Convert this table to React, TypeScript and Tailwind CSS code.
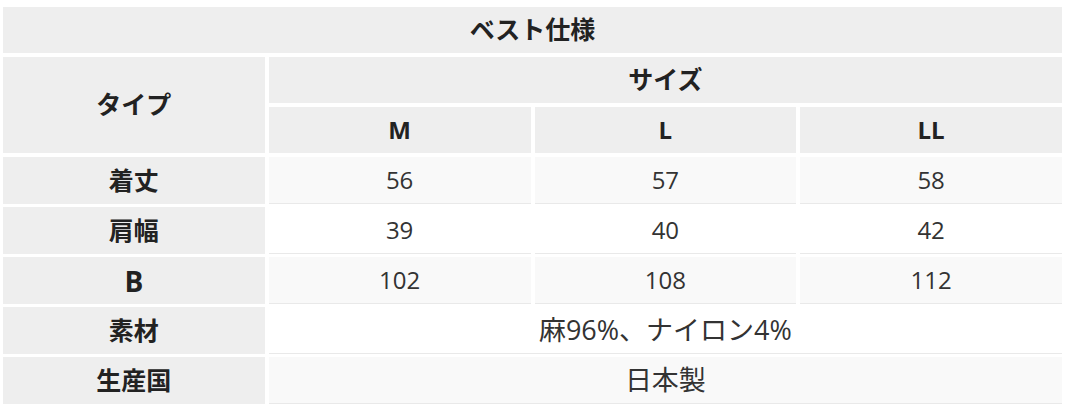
const font = {
  fontFamily: '"Open Sans", "Noto Sans CJK JP", sans-serif',
};

type SpecRow = {
  label: string;
  values: string[];
};

const rows: SpecRow[] = [
  { label: "着丈", values: ["56", "57", "58"] },
  { label: "肩幅", values: ["39", "40", "42"] },
  { label: "B", values: ["102", "108", "112"] },
  { label: "素材", values: ["麻96%、ナイロン4%"] },
  { label: "生産国", values: ["日本製"] },
];

const head =
  "flex items-center justify-center bg-[#eeeeee] font-bold text-[#222]";

export default function App() {
  return (
    <div className="w-[1065px] h-[414px] bg-white pl-[3px] pr-[3px] pt-[7px]" style={font}>
      <div className="grid grid-cols-4 gap-x-[4px] gap-y-[4px] text-[24px] auto-rows-[46px]">
        <div className={`${head} col-span-4 text-[25px]`}>ベスト仕様</div>
        <div className={`${head} row-span-2 text-[25px]`}>タイプ</div>
        <div className={`${head} col-span-3 text-[25px]`}>サイズ</div>
        <div className={head}>M</div>
        <div className={head}>L</div>
        <div className={head}>LL</div>
        {rows.map((row, i) => (
          <SpecLine key={row.label} row={row} striped={i % 2 === 0} />
        ))}
      </div>
    </div>
  );
}

function SpecLine({ row, striped }: { row: SpecRow; striped: boolean }) {
  const bg = striped ? "bg-[#f9f9f9]" : "bg-white";
  const wide = row.values.length === 1;
  return (
    <>
      <div
        className={`${head} h-[47px] ${row.label === "B" ? "text-[28px]" : "text-[25px]"}`}
      >
        {row.label}
      </div>
      {row.values.map((v) => (
        <div
          key={v}
          className={`flex h-[47px] items-center justify-center border-b border-[#e9e9e9] text-[#333] ${bg} ${
            wide ? "col-span-3 text-[27px]" : ""
          }`}
        >
          {v}
        </div>
      ))}
    </>
  );
}
